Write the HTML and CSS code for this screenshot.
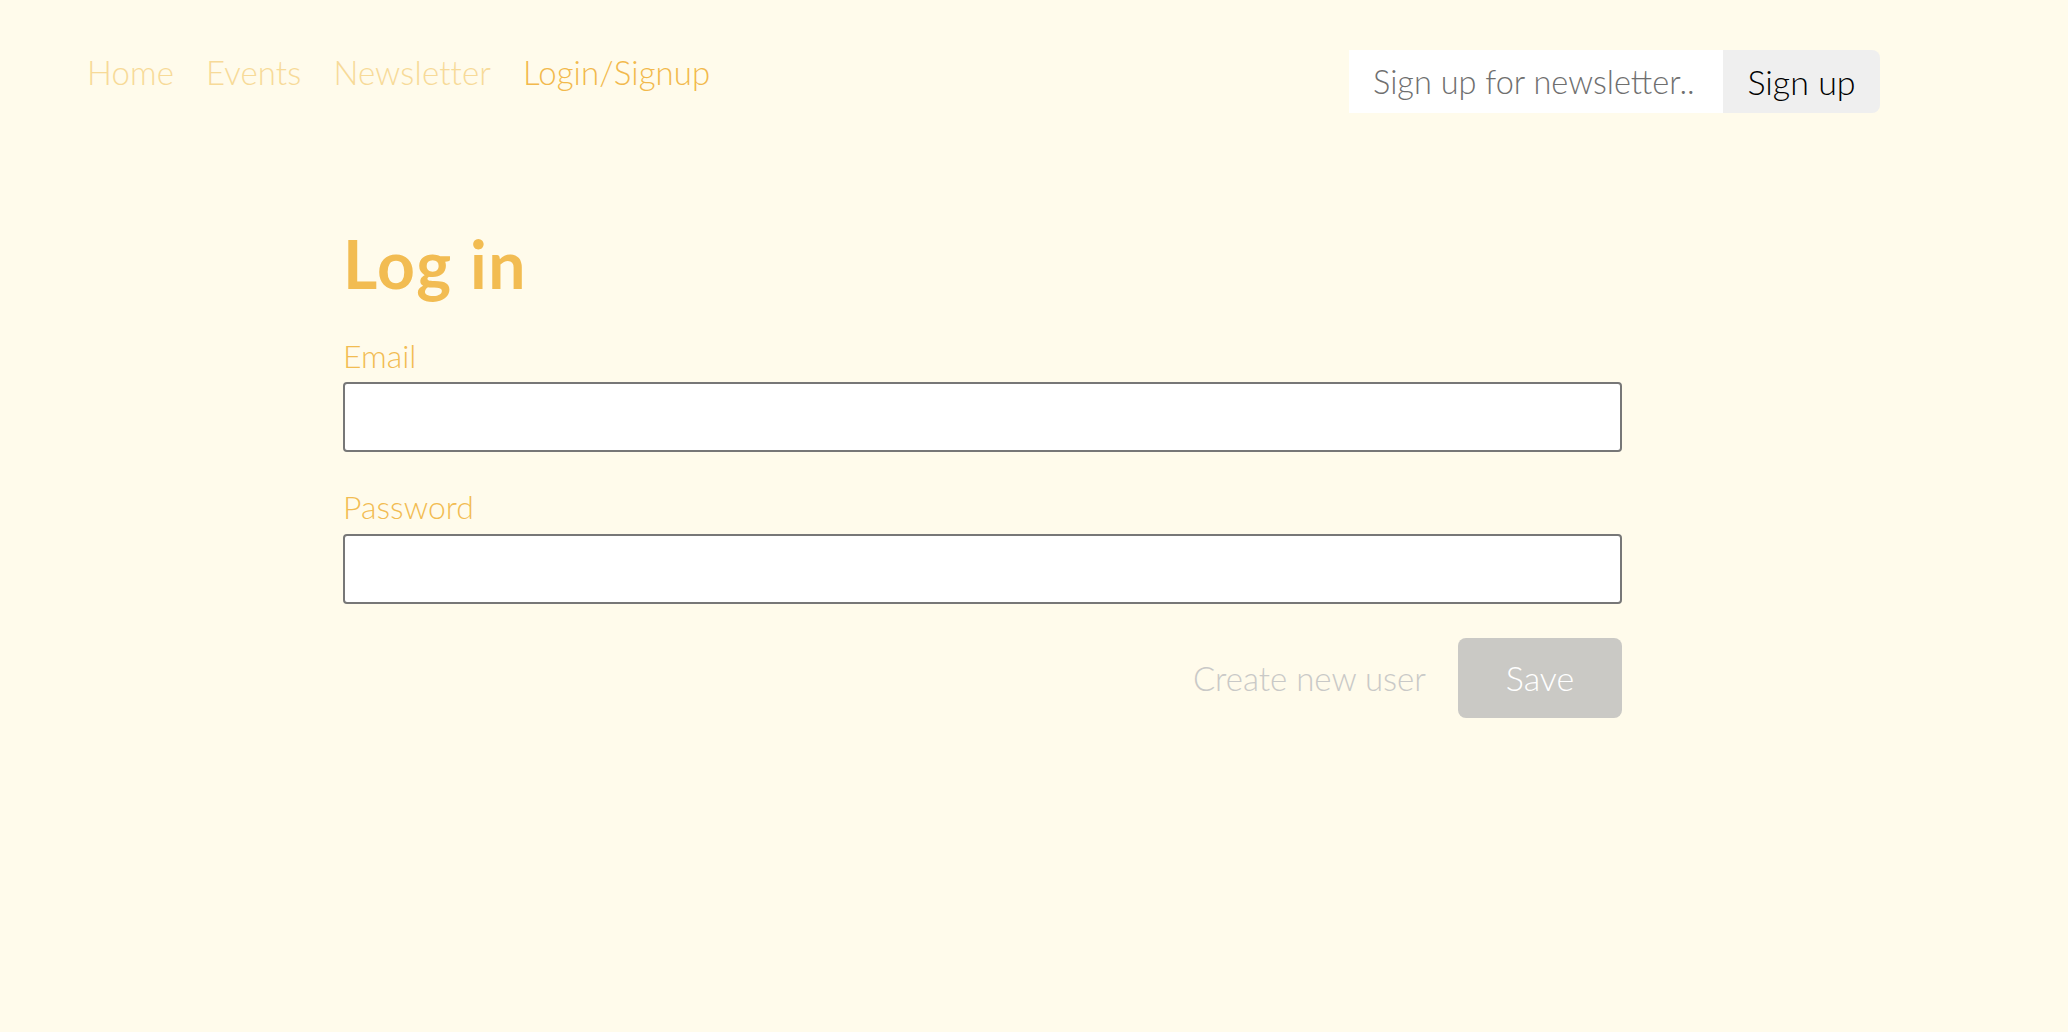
FILE: index.html
```html
<!DOCTYPE html>
<html lang="en">
<head>
<meta charset="utf-8">
<title>Log in</title>
<link rel="stylesheet" href="styles.css">
</head>
<body>
<header class="topbar">
  <nav class="nav">
    <a class="nav-link" href="#">Home</a>
    <a class="nav-link" href="#">Events</a>
    <a class="nav-link" href="#">Newsletter</a>
    <a class="nav-link active" href="#">Login/Signup</a>
  </nav>
  <form class="newsletter">
    <input class="newsletter-input" type="text" placeholder="Sign up for newsletter..">
    <button class="newsletter-btn" type="button">Sign up</button>
  </form>
</header>
<main class="main">
  <form class="login">
    <h1 class="title">Log in</h1>
    <label class="label" for="email">Email</label>
    <input class="field" id="email" type="email">
    <label class="label label-gap" for="password">Password</label>
    <input class="field" id="password" type="password">
    <div class="actions">
      <a class="create-link" href="#">Create new user</a>
      <button class="save-btn" type="button">Save</button>
    </div>
  </form>
</main>
</body>
</html>
```
FILE: styles.css
```css
html, body {
  margin: 0;
  padding: 0;
}
body {
  background: #fffbeb;
  font-family: Lato, "Noto Sans", sans-serif;
  height: 1032px;
}
.topbar {
  display: flex;
  justify-content: space-between;
  align-items: flex-start;
  padding: 50px 188px 0 87px;
}
.nav {
  display: flex;
  gap: 32px;
  margin-top: 3px;
}
.nav-link {
  font-size: 33px;
  line-height: 1.2;
  letter-spacing: 0.1px;
  color: #f7da98;
  text-decoration: none;
  font-weight: 300;
}
.nav-link.active {
  color: #f2b94c;
}
.newsletter {
  display: flex;
  height: 63px;
  margin: 0;
}
.newsletter-input {
  width: 374px;
  box-sizing: border-box;
  border: none;
  background: #ffffff;
  padding: 0 8px 0 24px;
  font-family: Lato, "Noto Sans", sans-serif;
  font-weight: 300;
  font-size: 32.5px;
  color: #333;
  outline: none;
}
.newsletter-input::placeholder {
  color: #6f6f6f;
}
.newsletter-btn {
  width: 157px;
  border: none;
  background: #efefef;
  border-radius: 0 8px 8px 0;
  font-family: Lato, "Noto Sans", sans-serif;
  font-weight: 300;
  font-size: 34px;
  color: #000;
  padding: 0;
}
.main {
  padding: 112px 0 0 343px;
}
.login {
  width: 1279px;
  display: flex;
  flex-direction: column;
}
.title {
  margin: 0 0 34px 0;
  font-size: 66px;
  line-height: 78px;
  font-weight: 700;
  letter-spacing: 1.5px;
  color: #f2bc52;
}
.label {
  font-size: 32px;
  font-weight: 300;
  line-height: 1.2;
  color: #f2bc52;
  margin-bottom: 7px;
}
.label-gap {
  margin-top: 36px;
}
.field {
  height: 70px;
  box-sizing: border-box;
  border: 2px solid #777777;
  border-radius: 4px;
  background: #ffffff;
  font-family: Lato, "Noto Sans", sans-serif;
  font-size: 30px;
  padding: 0 16px;
  outline: none;
}
.actions {
  display: flex;
  justify-content: flex-end;
  align-items: center;
  gap: 32px;
  margin-top: 34px;
}
.create-link {
  font-size: 33px;
  font-weight: 300;
  color: #c9c9c7;
  text-decoration: none;
}
.save-btn {
  width: 164px;
  height: 80px;
  border: none;
  border-radius: 8px;
  background: #cac9c5;
  color: #ffffff;
  font-family: Lato, "Noto Sans", sans-serif;
  font-weight: 300;
  font-size: 34px;
  padding: 0;
}
```
